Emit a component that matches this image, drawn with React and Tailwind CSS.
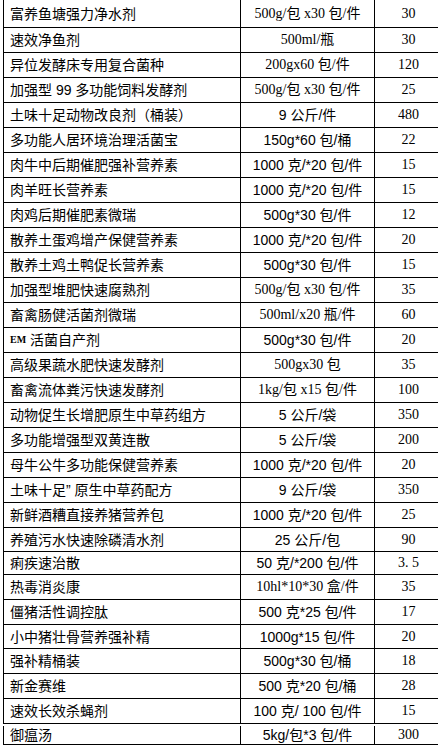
import React from "react";

const rows = [
  ["富养鱼塘强力净水剂", "500g/包 x30 包/件", "30", "s"],
  ["速效净鱼剂", "500ml/瓶", "30", "s"],
  ["异位发酵床专用复合菌种", "200gx60 包/件", "120", "s"],
  ["加强型 99 多功能饲料发酵剂", "500g/包 x30 包/件", "25", "s"],
  ["土味十足动物改良剂（桶装）", "9 公斤/件", "480", "a"],
  ["多功能人居环境治理活菌宝", "150g*60 包/桶", "22", "a"],
  ["肉牛中后期催肥强补营养素", "1000 克/*20 包/件", "15", "a"],
  ["肉羊旺长营养素", "1000 克/*20 包/件", "15", "a"],
  ["肉鸡后期催肥素微瑞", "500g*30 包/件", "12", "a"],
  ["散养土蛋鸡增产保健营养素", "1000 克/*20 包/件", "20", "a"],
  ["散养土鸡土鸭促长营养素", "500g*30 包/件", "15", "a"],
  ["加强型堆肥快速腐熟剂", "500g/包 x30 包/件", "35", "s"],
  ["畜禽肠健活菌剂微瑞", "500ml/x20 瓶/件", "60", "s"],
  ["EM", "500g*30 包/件", "20", "a"],
  ["高级果蔬水肥快速发酵剂", "500gx30 包", "35", "s"],
  ["畜禽流体粪污快速发酵剂", "1kg/包 x15 包/件", "100", "s"],
  ["动物促生长增肥原生中草药组方", "5 公斤/袋", "350", "a"],
  ["多功能增强型双黄连散", "5 公斤/袋", "200", "a"],
  ["母牛公牛多功能保健营养素", "1000 克/*20 包/件", "20", "a"],
  ["土味十足” 原生中草药配方", "9 公斤/袋", "350", "a"],
  ["新鲜酒糟直接养猪营养包", "1000 克/*20 包/件", "25", "a"],
  ["养殖污水快速除磷清水剂", "25 公斤/包", "90", "a"],
  ["痢疾速治散", "50 克/*200 包/件", "3. 5", "a"],
  ["热毒消炎康", "10hl*10*30 盒/件", "35", "s"],
  ["僵猪活性调控肽", "500 克*25 包/件", "17", "a"],
  ["小中猪壮骨营养强补精", "1000g*15 包/件", "20", "a"],
  ["强补精桶装", "500g*30 包/桶", "18", "a"],
  ["新金赛维", "500 克*20 包/桶", "28", "a"],
  ["速效长效杀蝇剂", "100 克/ 100 包/件", "15", "a"],
  ["御瘟汤", "5kg/包*3 包/件", "300", "a"],
];

const heights = [
  "h-[28px]", "h-[25px]", "h-[25px]", "h-[25px]", "h-[25px]",
  "h-[25px]", "h-[25px]", "h-[25px]", "h-[25px]", "h-[25px]",
  "h-[25px]", "h-[25px]", "h-[25px]", "h-[25px]", "h-[25px]",
  "h-[25px]", "h-[25px]", "h-[25px]", "h-[25px]", "h-[25px]",
  "h-[25px]", "h-[24px]", "h-[23px]", "h-[25px]", "h-[25px]",
  "h-[24px]", "h-[25px]", "h-[25px]", "h-[25px]", "h-[21px] pt-[2px]",
];

const SANS = "font-['Liberation_Sans','Noto_Sans_CJK_SC',sans-serif]";
const SERIF = "font-['Liberation_Serif','Noto_Sans_CJK_SC',serif]";

export default function App() {
  return (
    <div className="w-[438px] h-[749px] overflow-hidden bg-white text-black">
      <div className="ml-[3px] w-[439px] flex flex-col">
        {rows.map((r, i) => (
          <div key={i} className={`flex border-b border-black ${heights[i]}`}>
            <div
              className={`w-[237px] shrink-0 border-l border-black flex items-center pl-[6px] text-[14px] leading-none whitespace-nowrap ${SANS}`}
            >
              {r[0] === "EM" ? (
                <>
                  <span
                    className={`text-[10px] font-bold mr-[4px] ${SERIF}`}
                  >
                    EM
                  </span>
                  活菌自产剂
                </>
              ) : (
                r[0]
              )}
            </div>
            <div
              className={`w-[134px] shrink-0 border-l border-black flex items-center justify-center text-[14px] leading-none whitespace-nowrap ${
                r[3] === "s" ? SERIF : SANS
              }`}
            >
              {r[1]}
            </div>
            <div
              className={`w-[68px] shrink-0 border-l border-black flex items-center justify-center text-[14px] leading-none whitespace-pre ${SERIF}`}
            >
              {r[2]}
            </div>
          </div>
        ))}
      </div>
    </div>
  );
}
